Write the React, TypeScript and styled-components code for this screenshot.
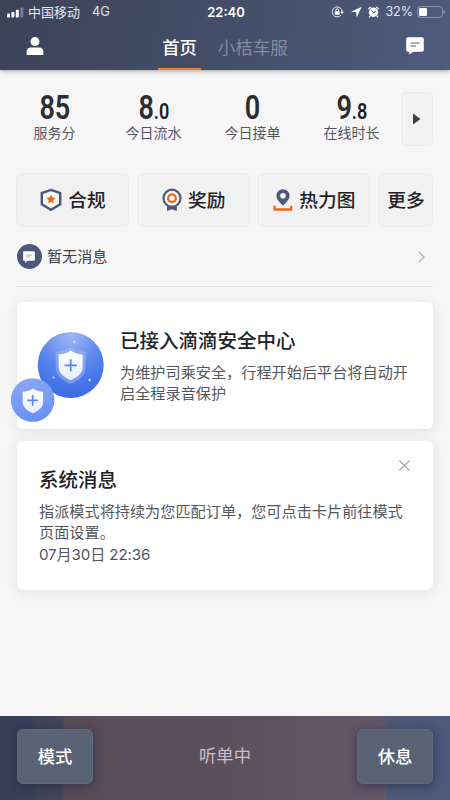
import React from 'react';
import styled, { createGlobalStyle } from 'styled-components';

const GlobalStyle = createGlobalStyle`
  *, *::before, *::after { box-sizing: border-box; }
  html, body { margin: 0; padding: 0; overflow: hidden; }
  body { font-family: "Liberation Sans", "Noto Sans CJK SC", sans-serif; background: #f6f6f7; }
  svg { display: block; flex: none; }
`;

const Screen = styled.div`
  width: 450px;
  height: 800px;
  display: flex;
  flex-direction: column;
  background: #f6f6f7;
  overflow: hidden;
  white-space: nowrap;
`;

const Header = styled.header`
  flex: none;
  height: 70px;
  background: linear-gradient(100deg, #3b4359 0%, #444e68 50%, #4e5b7c 100%);
  box-shadow: 0 1px 5px rgba(40, 44, 60, 0.42);
  color: #fff;
`;

const StatusBar = styled.div`
  height: 24px;
  display: grid;
  grid-template-columns: 1fr auto 1fr;
  align-items: center;
  padding: 0 5px 0 7px;
  font-family: Inter, "Noto Sans CJK SC", sans-serif;
  font-size: 12.8px;
  line-height: 24px;
  color: #e3e6ee;
`;

const StatusGroup = styled.div<{ $end?: boolean }>`
  display: flex;
  align-items: center;
  justify-content: ${(p) => (p.$end ? 'flex-end' : 'flex-start')};
`;

const Carrier = styled.span`
  margin: 0 12px 0 4px;
  font-size: 13px;
`;

const Clock = styled.span`
  font-size: 13px;
  font-weight: 600;
  color: #fff;
`;

const BatteryLevel = styled.span`
  margin: 0 4px 0 6px;
  font-size: 12.5px;
`;

const NavBar = styled.nav`
  height: 46px;
  display: flex;
  align-items: stretch;
  justify-content: space-between;
  padding: 0 26px 0 26px;
`;

const NavIcon = styled.span`
  display: flex;
  align-items: center;
  padding-bottom: 3px;
`;

const Tabs = styled.div`
  display: flex;
  gap: 13px;
`;

const Tab = styled.div<{ $active?: boolean }>`
  padding: 0 4px;
  height: 46px;
  line-height: 48px;
  font-size: ${(p) => (p.$active ? '17.3px' : '17.5px')};
  font-weight: ${(p) => (p.$active ? 500 : 400)};
  color: ${(p) => (p.$active ? '#fff' : '#868c9e')};
  border-bottom: 2px solid ${(p) => (p.$active ? '#f27c32' : 'transparent')};
`;

const Content = styled.main`
  flex: 1;
  padding: 22px 17px 0 16px;
`;

const Stats = styled.section`
  display: flex;
  height: 54px;
  margin-left: -11px;
`;

const StatGrid = styled.div`
  flex: none;
  display: grid;
  grid-template-columns: repeat(4, 99px);
`;

const Stat = styled.div`
  display: flex;
  flex-direction: column;
  align-items: center;
`;

const StatValue = styled.div`
  height: 32px;
  line-height: 31px;
  font-family: Roboto, sans-serif;
  font-size: 33px;
  font-weight: 600;
  color: #2c2d30;
  transform: scaleX(0.82);
  small { font-size: 22px; color: #1c1d20; }
`;

const StatLabel = styled.div`
  font-size: 14px;
  line-height: 20px;
  margin-top: -1px;
  color: #54565f;
`;

const ExpandButton = styled.div`
  flex: none;
  width: 32px;
  height: 54px;
  display: flex;
  align-items: center;
  justify-content: center;
  border-radius: 5px;
  border: 1px solid #ebebec;
  background: #f1f1f2;
`;

const Actions = styled.section`
  display: grid;
  grid-template-columns: 113px 113px 113px 55px;
  justify-content: space-between;
  margin-top: 27px;
`;

const Action = styled.div`
  height: 54px;
  display: flex;
  align-items: center;
  justify-content: center;
  gap: 6px;
  padding-left: 1px;
  border-radius: 6px;
  border: 1px solid #ebebec;
  background: #f1f1f2;
  font-size: 18.7px;
  font-weight: 500;
  color: #222326;
`;

const ActionLabel = styled.span`
  line-height: 28px;
  padding-top: 2px;
`;

const MessageRow = styled.div`
  display: flex;
  align-items: center;
  height: 60px;
  padding-right: 8px;
  border-bottom: 1px solid #e6e6e8;
  font-size: 15.1px;
  color: #3e4046;
`;

const MessageBadge = styled.span`
  width: 25px;
  height: 25px;
  margin: 0 5.5px 0 0.5px;
  display: flex;
  align-items: center;
  justify-content: center;
  border-radius: 50%;
  background: #4d597a;
`;

const MessageText = styled.span`
  flex: 1;
  line-height: 20px;
`;

const Card = styled.article<{ $height: number; $gap: number }>`
  position: relative;
  height: ${(p) => p.$height}px;
  margin: ${(p) => p.$gap}px 0 0 1px;
  border-radius: 6px;
  background: #fff;
  box-shadow: 0 2px 12px rgba(60, 60, 70, 0.11);
`;

const CardText = styled.div<{ $left: number; $top: number }>`
  padding: ${(p) => p.$top}px 0 0 ${(p) => p.$left}px;
`;

const CardTitle = styled.h2`
  margin: 0 0 7px;
  font-size: 19.5px;
  line-height: 28px;
  font-weight: 500;
  color: #222326;
`;

const CardBody = styled.p`
  margin: 0;
  font-size: 15.17px;
  line-height: 21.4px;
  color: #54565c;
`;

const Timestamp = styled.time`
  font-family: Inter, "Noto Sans CJK SC", sans-serif;
  letter-spacing: -0.15px;
`;

const SafetyArt = styled.svg`
  position: absolute;
  left: -8px;
  top: 26px;
`;

const CloseIcon = styled.svg`
  position: absolute;
  right: 22px;
  top: 18px;
`;

const Footer = styled.footer`
  flex: none;
  height: 84px;
  display: flex;
  align-items: flex-start;
  justify-content: space-between;
  padding: 13px 17px 0 17px;
  background: linear-gradient(90deg, #374058 0, #374159 32px, #414359 33px, #46475b 63px, #584d57 64px, #5c505c 230px, #65586a 385px, #535978 386px, #4b5a7c 450px);
`;

const FooterButton = styled.div`
  width: 76px;
  height: 55px;
  line-height: 54px;
  text-align: center;
  border-radius: 6px;
  border: 1px solid #606a7d;
  background: #5a6375;
  box-shadow: 0 2px 12px rgba(28, 32, 62, 0.6);
  font-size: 17.3px;
  font-weight: 500;
  color: #fff;
`;

const ListenStatus = styled.div`
  height: 55px;
  line-height: 55px;
  font-size: 17.3px;
  color: #c7c1cb;
`;

const SignalIcon = () => (
  <svg width="17" height="11" viewBox="0 0 17 11">
    <rect x="0" y="6.5" width="3" height="4" rx="0.8" fill="#fff" />
    <rect x="4.4" y="5" width="3" height="5.5" rx="0.8" fill="#fff" />
    <rect x="8.8" y="2.8" width="3" height="7.7" rx="0.8" fill="#fff" />
    <rect x="13.2" y="0.5" width="3.2" height="10" rx="0.8" fill="#737b8e" />
  </svg>
);

const StatusIcons = () => (
  <svg width="48" height="14" viewBox="0 0 48 14" fill="none">
    <path d="M10.2 9.9A5 5 0 1 1 11.2 7" stroke="#e8eaf0" strokeWidth="1" />
    <path d="M9.3 6.8h3.6l-1.8 2.4z" fill="#e8eaf0" />
    <rect x="3.8" y="6.2" width="4.8" height="3.6" rx="0.5" fill="#fff" />
    <path d="M4.8 6.4V5.3a1.4 1.4 0 0 1 2.8 0v1.1" stroke="#fff" strokeWidth="1" />
    <path d="M30.7 1.7 20 6.8l5.2.5.4 5.1z" fill="#fff" />
    <circle cx="42.5" cy="7.2" r="4.7" fill="#fff" />
    <path d="M37.6 4.2a5 5 0 0 1 2.2-2.2M45.2 2a5 5 0 0 1 2.2 2.2M39.2 11l-1.1 1.3M45.8 11l1.1 1.3" stroke="#fff" strokeWidth="1.4" />
    <path d="M40.3 5.3l2.4 2.2 2.2-1.1" stroke="#465069" strokeWidth="1" />
  </svg>
);

const BatteryIcon = () => (
  <svg width="28" height="12" viewBox="0 0 28 12" fill="none">
    <rect x="0.6" y="0.6" width="24.8" height="10.8" rx="2.7" stroke="#9098ab" />
    <rect x="2" y="2" width="8" height="8" rx="1.2" fill="#fff" />
    <path d="M26.4 4a2.1 2.1 0 0 1 0 4z" fill="#9098ab" />
  </svg>
);

const UserIcon = () => (
  <svg width="18" height="18" viewBox="0 0 18 18" fill="#fff">
    <circle cx="9" cy="4.6" r="4.5" />
    <path d="M.6 18v-3.1c0-2.7 1.5-4.5 4.2-4.5h8.4c2.7 0 4.2 1.8 4.2 4.5V18z" />
  </svg>
);

const ChatIcon = ({ width, line }: { width: number; line: string }) => (
  <svg width={width} height={width} viewBox="0 0 18 18">
    <path d="M1.8.3h14.4a1.6 1.6 0 0 1 1.6 1.6v11.2a1.6 1.6 0 0 1-1.6 1.6H7.4l-4.2 2.8v-2.8H1.8a1.6 1.6 0 0 1-1.6-1.6V1.9A1.6 1.6 0 0 1 1.8.3z" fill="#fff" />
    <path d="M4.6 6h9M4.6 9h5.5" stroke={line} strokeWidth="1.1" />
  </svg>
);

const ShieldStarIcon = () => (
  <svg width="22" height="24" viewBox="0 0 22 24">
    <path d="M11 1.9 20.2 5v11.4L11 21.9l-9.2-5.5V5z" fill="#fafafa" stroke="#4c5979" strokeWidth="2.4" />
    <path d="m11 6.6 1.4 3 3.2.4-2.3 2.2.6 3.2-2.9-1.6-2.9 1.6.6-3.2L6.4 10l3.2-.4z" fill="#ec6519" />
  </svg>
);

const MedalIcon = () => (
  <svg width="20" height="24" viewBox="0 0 20 24">
    <path d="M5 16v7l4.800-1.800L14.800 23v-7z" fill="#4c5979" />
    <circle cx="10" cy="10.200" r="8.500" fill="#f8f8f8" stroke="#4c5979" strokeWidth="2.200" />
    <circle cx="10" cy="10.200" r="3.800" fill="#fff" stroke="#ec6519" strokeWidth="2.300" />
  </svg>
);

const PinIcon = () => (
  <svg width="20" height="24" viewBox="0 0 20 24">
    <path d="M10 1.200a6.600 6.600 0 0 1 6.600 6.500c0 3.300-3.300 7-6.600 9.900-3.300-2.900-6.600-6.600-6.600-9.900A6.600 6.600 0 0 1 10 1.200z" fill="#4c5979" />
    <circle cx="10" cy="7.800" r="2.800" fill="#fafafa" />
    <path d="M1.600 17.800v3.700h16.600v-3.700" fill="none" stroke="#ec6519" strokeWidth="2.300" />
  </svg>
);

const SafetyIllustration = () => (
  <SafetyArt width="100" height="98" viewBox="9 328 100 98">
    <defs>
      <radialGradient id="bigBall" cx="0.5" cy="0.05" r="0.95">
        <stop offset="0" stopColor="#a0b6f7" />
        <stop offset="0.55" stopColor="#5783ec" />
        <stop offset="1" stopColor="#3a6ae6" />
      </radialGradient>
      <linearGradient id="smallBall" x1="0.4" y1="0" x2="0.6" y2="1">
        <stop offset="0" stopColor="#8da6f3" />
        <stop offset="1" stopColor="#6490f7" />
      </linearGradient>
      <linearGradient id="shieldFill" x1="0" y1="0" x2="0" y2="1">
        <stop offset="0" stopColor="#fff" />
        <stop offset="1" stopColor="#e5edfe" />
      </linearGradient>
    </defs>
    <circle cx="70.700" cy="365" r="33" fill="url(#bigBall)" />
    <path d="M70.700 346.500c4 3.300 9 4.600 15 5.200v15c0 8.500-6 13.500-15 17.300-9-3.800-15-8.800-15-17.300v-15c6-.6 11-1.900 15-5.200z" fill="#9fbbf6" opacity=".5" />
    <path d="M70.700 350.500c3 2.400 7 3.500 12 4v12c0 6.500-4.500 10.500-12 13.700-7.500-3.200-12-7.200-12-13.700v-12c5-.5 9-1.600 12-4z" fill="url(#shieldFill)" />
    <path d="M70.700 359.200v12.400M64.500 365.400h12.400" stroke="#5886ea" strokeWidth="1.700" />
    <g fill="#c5d5ff">
      <circle cx="74.500" cy="342" r="1.500" />
      <circle cx="53.500" cy="377.500" r="1.100" />
      <circle cx="89.500" cy="380" r="1.200" />
    </g>
    <circle cx="32.700" cy="400" r="21.800" fill="url(#smallBall)" />
    <path d="M32.900 388.400c2.600 2 6 3 10.200 3.400v10c0 5.400-3.800 8.800-10.200 11.500-6.400-2.700-10.200-6.100-10.200-11.500v-10c4.200-.4 7.600-1.400 10.200-3.400z" fill="url(#shieldFill)" />
    <path d="M32.700 395v10.800M27.300 400.400h10.800" stroke="#6387e5" strokeWidth="1.700" />
  </SafetyArt>
);

const stats = [
  { whole: '85', fraction: '', label: '服务分' },
  { whole: '8', fraction: '.0', label: '今日流水' },
  { whole: '0', fraction: '', label: '今日接单' },
  { whole: '9', fraction: '.8', label: '在线时长' },
];

const actions = [
  { label: '合规', icon: <ShieldStarIcon /> },
  { label: '奖励', icon: <MedalIcon /> },
  { label: '热力图', icon: <PinIcon /> },
  { label: '更多', icon: null },
];

export default function App() {
  return (
    <Screen>
      <GlobalStyle />
      <Header>
        <StatusBar>
          <StatusGroup>
            <SignalIcon />
            <Carrier>中国移动</Carrier>
            <span>4G</span>
          </StatusGroup>
          <Clock>22:40</Clock>
          <StatusGroup $end>
            <StatusIcons />
            <BatteryLevel>32%</BatteryLevel>
            <BatteryIcon />
          </StatusGroup>
        </StatusBar>
        <NavBar>
          <NavIcon><UserIcon /></NavIcon>
          <Tabs>
            <Tab $active>首页</Tab>
            <Tab>小桔车服</Tab>
          </Tabs>
          <NavIcon><ChatIcon width={18} line="#625b80" /></NavIcon>
        </NavBar>
      </Header>

      <Content>
        <Stats>
          <StatGrid>
            {stats.map((s) => (
              <Stat key={s.label}>
                <StatValue>{s.whole}{s.fraction && <small>{s.fraction}</small>}</StatValue>
                <StatLabel>{s.label}</StatLabel>
              </Stat>
            ))}
          </StatGrid>
          <ExpandButton>
            <svg width="8" height="12" viewBox="0 0 8 12"><path d="M0 .5 7.500 6 0 11.500z" fill="#3f4043" /></svg>
          </ExpandButton>
        </Stats>

        <Actions>
          {actions.map((a) => (
            <Action key={a.label}>{a.icon}<ActionLabel>{a.label}</ActionLabel></Action>
          ))}
        </Actions>

        <MessageRow>
          <MessageBadge><ChatIcon width={12} line="#8d8f99" /></MessageBadge>
          <MessageText>暂无消息</MessageText>
          <svg width="7" height="12" viewBox="0 0 7 12"><path d="m.8.800 5.200 5.200-5.200 5.200" fill="none" stroke="#a8a8ab" strokeWidth="1.200" /></svg>
        </MessageRow>

        <Card $height={127} $gap={15}>
          <SafetyIllustration />
          <CardText $left={103} $top={25}>
            <CardTitle>已接入滴滴安全中心</CardTitle>
            <CardBody>为维护司乘安全，行程开始后平台将自动开<br />启全程录音保护</CardBody>
          </CardText>
        </Card>

        <Card $height={149} $gap={12}>
          <CloseIcon width="13" height="13" viewBox="0 0 13 13">
            <path d="m1.300 1.300 10.400 10.400M11.700 1.300 1.300 11.700" stroke="#a2a2a5" strokeWidth="1.200" />
          </CloseIcon>
          <CardText $left={22} $top={25}>
            <CardTitle>系统消息</CardTitle>
            <CardBody>指派模式将持续为您匹配订单，您可点击卡片前往模式<br />页面设置。<br /><Timestamp>07月30日 22:36</Timestamp></CardBody>
          </CardText>
        </Card>
      </Content>

      <Footer>
        <FooterButton>模式</FooterButton>
        <ListenStatus>听单中</ListenStatus>
        <FooterButton>休息</FooterButton>
      </Footer>
    </Screen>
  );
}
